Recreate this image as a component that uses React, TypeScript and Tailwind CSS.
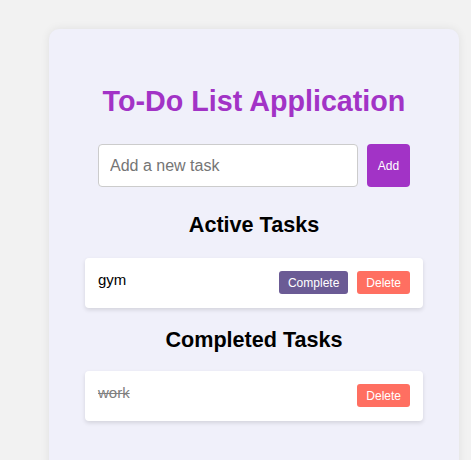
import { useState } from 'react';

type Task = { id: number; text: string; done: boolean };

export default function App() {
  const [tasks, setTasks] = useState<Task[]>([
    { id: 1, text: 'gym', done: false },
    { id: 2, text: 'work', done: true },
  ]);
  const [draft, setDraft] = useState('');

  const add = () => {
    const text = draft.trim();
    if (!text) return;
    setTasks((prev) => [...prev, { id: Date.now(), text, done: false }]);
    setDraft('');
  };

  const active = tasks.filter((t) => !t.done);
  const completed = tasks.filter((t) => t.done);

  return (
    <div className="min-h-[460px] bg-[#f2f2f2] pt-[29px] pl-[49px] font-['Liberation_Sans',Arial,sans-serif]">
      <div className="w-[410px] rounded-[10px] bg-[#f0f0fa] px-[36px] pt-[56px] pb-[60px] shadow-[0_0_10px_rgba(0,0,0,0.08)]">
        <h1 className="text-center text-[28.7px] font-bold leading-8 text-[#a233c6]">
          To-Do List Application
        </h1>

        <div className="mt-[27px] flex justify-center gap-[9px]">
          <input
            value={draft}
            onChange={(e) => setDraft(e.target.value)}
            placeholder="Add a new task"
            className="h-[43px] w-[260px] rounded-[4px] border border-[#cccccc] bg-white px-[11px] text-base text-black outline-none placeholder:text-[#757575]"
          />
          <button
            type="button"
            onClick={add}
            className="h-[43px] w-[43px] rounded-[4px] bg-[#a233c6] text-[12px] text-white"
          >
            Add
          </button>
        </div>

        <h2 className="mt-[26px] text-center text-[21.6px] font-bold leading-6 text-black">Active Tasks</h2>
        <div className="mt-[21px] space-y-3">
          {active.map((t) => (
            <div
              key={t.id}
              className="flex h-[50px] items-start justify-between rounded-[4px] bg-white px-[13px] pt-[13px] shadow-[0_2px_4px_rgba(0,0,0,0.12)]"
            >
              <span className="text-[15px] leading-[17px] text-black">{t.text}</span>
              <div className="flex gap-[9px]">
                <button
                  type="button"
                  onClick={() => setTasks((prev) => prev.map((x) => (x.id === t.id ? { ...x, done: true } : x)))}
                  className="h-[23px] rounded-[3px] bg-[#6b5b95] px-[9px] text-[12px] text-white"
                >
                  Complete
                </button>
                <button
                  type="button"
                  onClick={() => setTasks((prev) => prev.filter((x) => x.id !== t.id))}
                  className="h-[23px] rounded-[3px] bg-[#ff6f61] px-[9px] text-[12px] text-white"
                >
                  Delete
                </button>
              </div>
            </div>
          ))}
        </div>

        <h2 className="mt-[20px] text-center text-[21.6px] font-bold leading-6 text-black">Completed Tasks</h2>
        <div className="mt-[19px] space-y-3">
          {completed.map((t) => (
            <div
              key={t.id}
              className="flex h-[50px] items-start justify-between rounded-[4px] bg-white px-[13px] pt-[13px] shadow-[0_2px_4px_rgba(0,0,0,0.12)]"
            >
              <span className="text-[15px] leading-[17px] text-[#808080] line-through">{t.text}</span>
              <button
                type="button"
                onClick={() => setTasks((prev) => prev.filter((x) => x.id !== t.id))}
                className="h-[23px] rounded-[3px] bg-[#ff6f61] px-[9px] text-[12px] text-white"
              >
                Delete
              </button>
            </div>
          ))}
        </div>
      </div>
    </div>
  );
}
